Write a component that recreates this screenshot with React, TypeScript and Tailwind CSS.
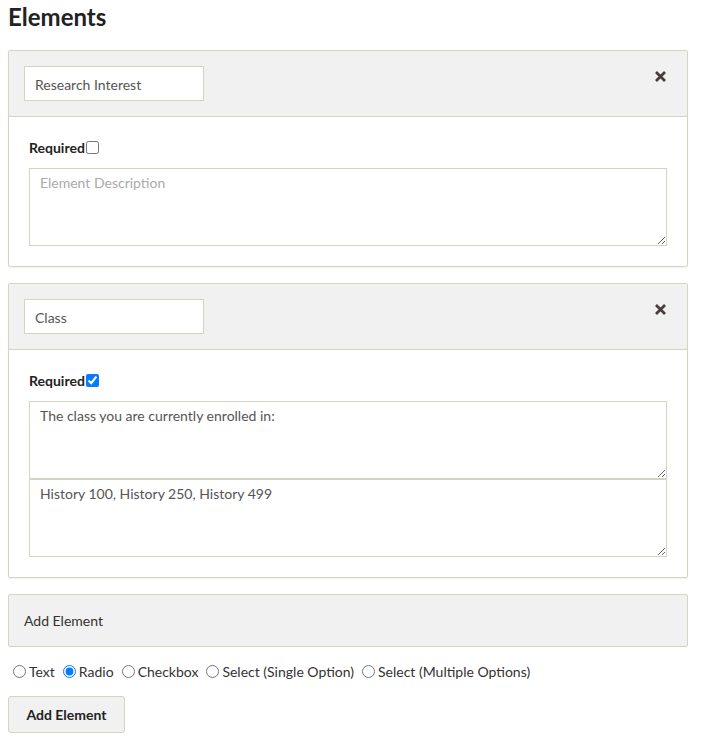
import { FC } from "react";

const CloseIcon: FC = () => (
  <svg width="13" height="13" viewBox="0 0 13 13" className="text-[#4a3c3c]">
    <path
      d="M2 2 L11 11 M11 2 L2 11"
      stroke="currentColor"
      strokeWidth="2.8"
      strokeLinecap="butt"
    />
  </svg>
);

type PanelProps = {
  title: string;
  required: boolean;
  fields: { value?: string; placeholder?: string }[];
};

const ElementPanel: FC<PanelProps> = ({ title, required, fields }) => (
  <div className="border border-[#d5d3c1] rounded-[2px] bg-white shadow-[0_1px_2px_rgba(0,0,0,0.06)]">
    {/* header with name input */}
    <div className="flex items-center justify-between bg-[#f0f1f0] border-b border-[#d5d3c1] pl-[15px] pr-[20px] py-[15px]">
      <input
        type="text"
        defaultValue={title}
        className="w-[180px] h-[35px] border border-[#d5d3c1] bg-white px-[10px] pt-[2px] text-[14px] text-[#555] outline-none"
      />
      <button className="cursor-pointer -mt-[14px]">
        <CloseIcon />
      </button>
    </div>

    {/* body */}
    <div className="px-[20px] pt-[21px] pb-[20px]">
      <label className="flex items-center text-[14px] font-bold text-[#222] h-[18px]">
        Required
        <input
          type="checkbox"
          defaultChecked={required}
          className="w-[13px] h-[13px] ml-[1px] accent-[#0a7aff]"
        />
      </label>
      <div className="mt-[12px] flex flex-col">
        {fields.map((f, i) => (
          <textarea
            key={i}
            defaultValue={f.value}
            placeholder={f.placeholder}
            className="block w-full h-[78px] border border-[#d5d3c1] bg-white px-[10px] pt-[3px] pb-[6px] text-[14px] text-[#555] placeholder:text-[#aaa] outline-none"
          />
        ))}
      </div>
    </div>
  </div>
);

const App: FC = () => {
  const types = [
    { label: "Text", checked: false },
    { label: "Radio", checked: true },
    { label: "Checkbox", checked: false },
    { label: "Select (Single Option)", checked: false },
    { label: "Select (Multiple Options)", checked: false },
  ];

  return (
    <div className="min-h-screen bg-white font-['Lato','Liberation_Sans',sans-serif] text-[#333] px-2 pb-4">
      <h1 className="text-[24px] font-bold text-[#222] leading-[32px] pt-[1px]">
        Elements
      </h1>

      <div className="w-[680px] mt-[17px] flex flex-col gap-[16px]">
        <ElementPanel
          title="Research Interest"
          required={false}
          fields={[{ placeholder: "Element Description" }]}
        />
        <ElementPanel
          title="Class"
          required={true}
          fields={[
            { value: "The class you are currently enrolled in:" },
            { value: "History 100, History 250, History 499" },
          ]}
        />

        {/* add element panel */}
        <div className="bg-[#f0f1f0] border border-[#d5d3c1] rounded-[2px] h-[53px] flex items-center px-[15px] text-[14px] text-[#333]">
          Add Element
        </div>
      </div>

      {/* element type radios */}
      <div className="flex items-center mt-[16px] h-[17px] text-[14px] text-[#333]">
        {types.map((t) => (
          <label key={t.label} className="flex items-center mr-[3px]">
            <input
              type="radio"
              name="type"
              defaultChecked={t.checked}
              className="w-[13px] h-[13px] ml-[5px] mr-[3px] accent-[#0a7aff]"
            />
            {t.label}
          </label>
        ))}
      </div>

      <button className="mt-[16px] w-[117px] h-[37px] bg-[#f0f1f0] border border-[#d5d3c1] rounded-[3px] text-[14px] font-bold text-[#222] cursor-pointer">
        Add Element
      </button>
    </div>
  );
};

export default App;
